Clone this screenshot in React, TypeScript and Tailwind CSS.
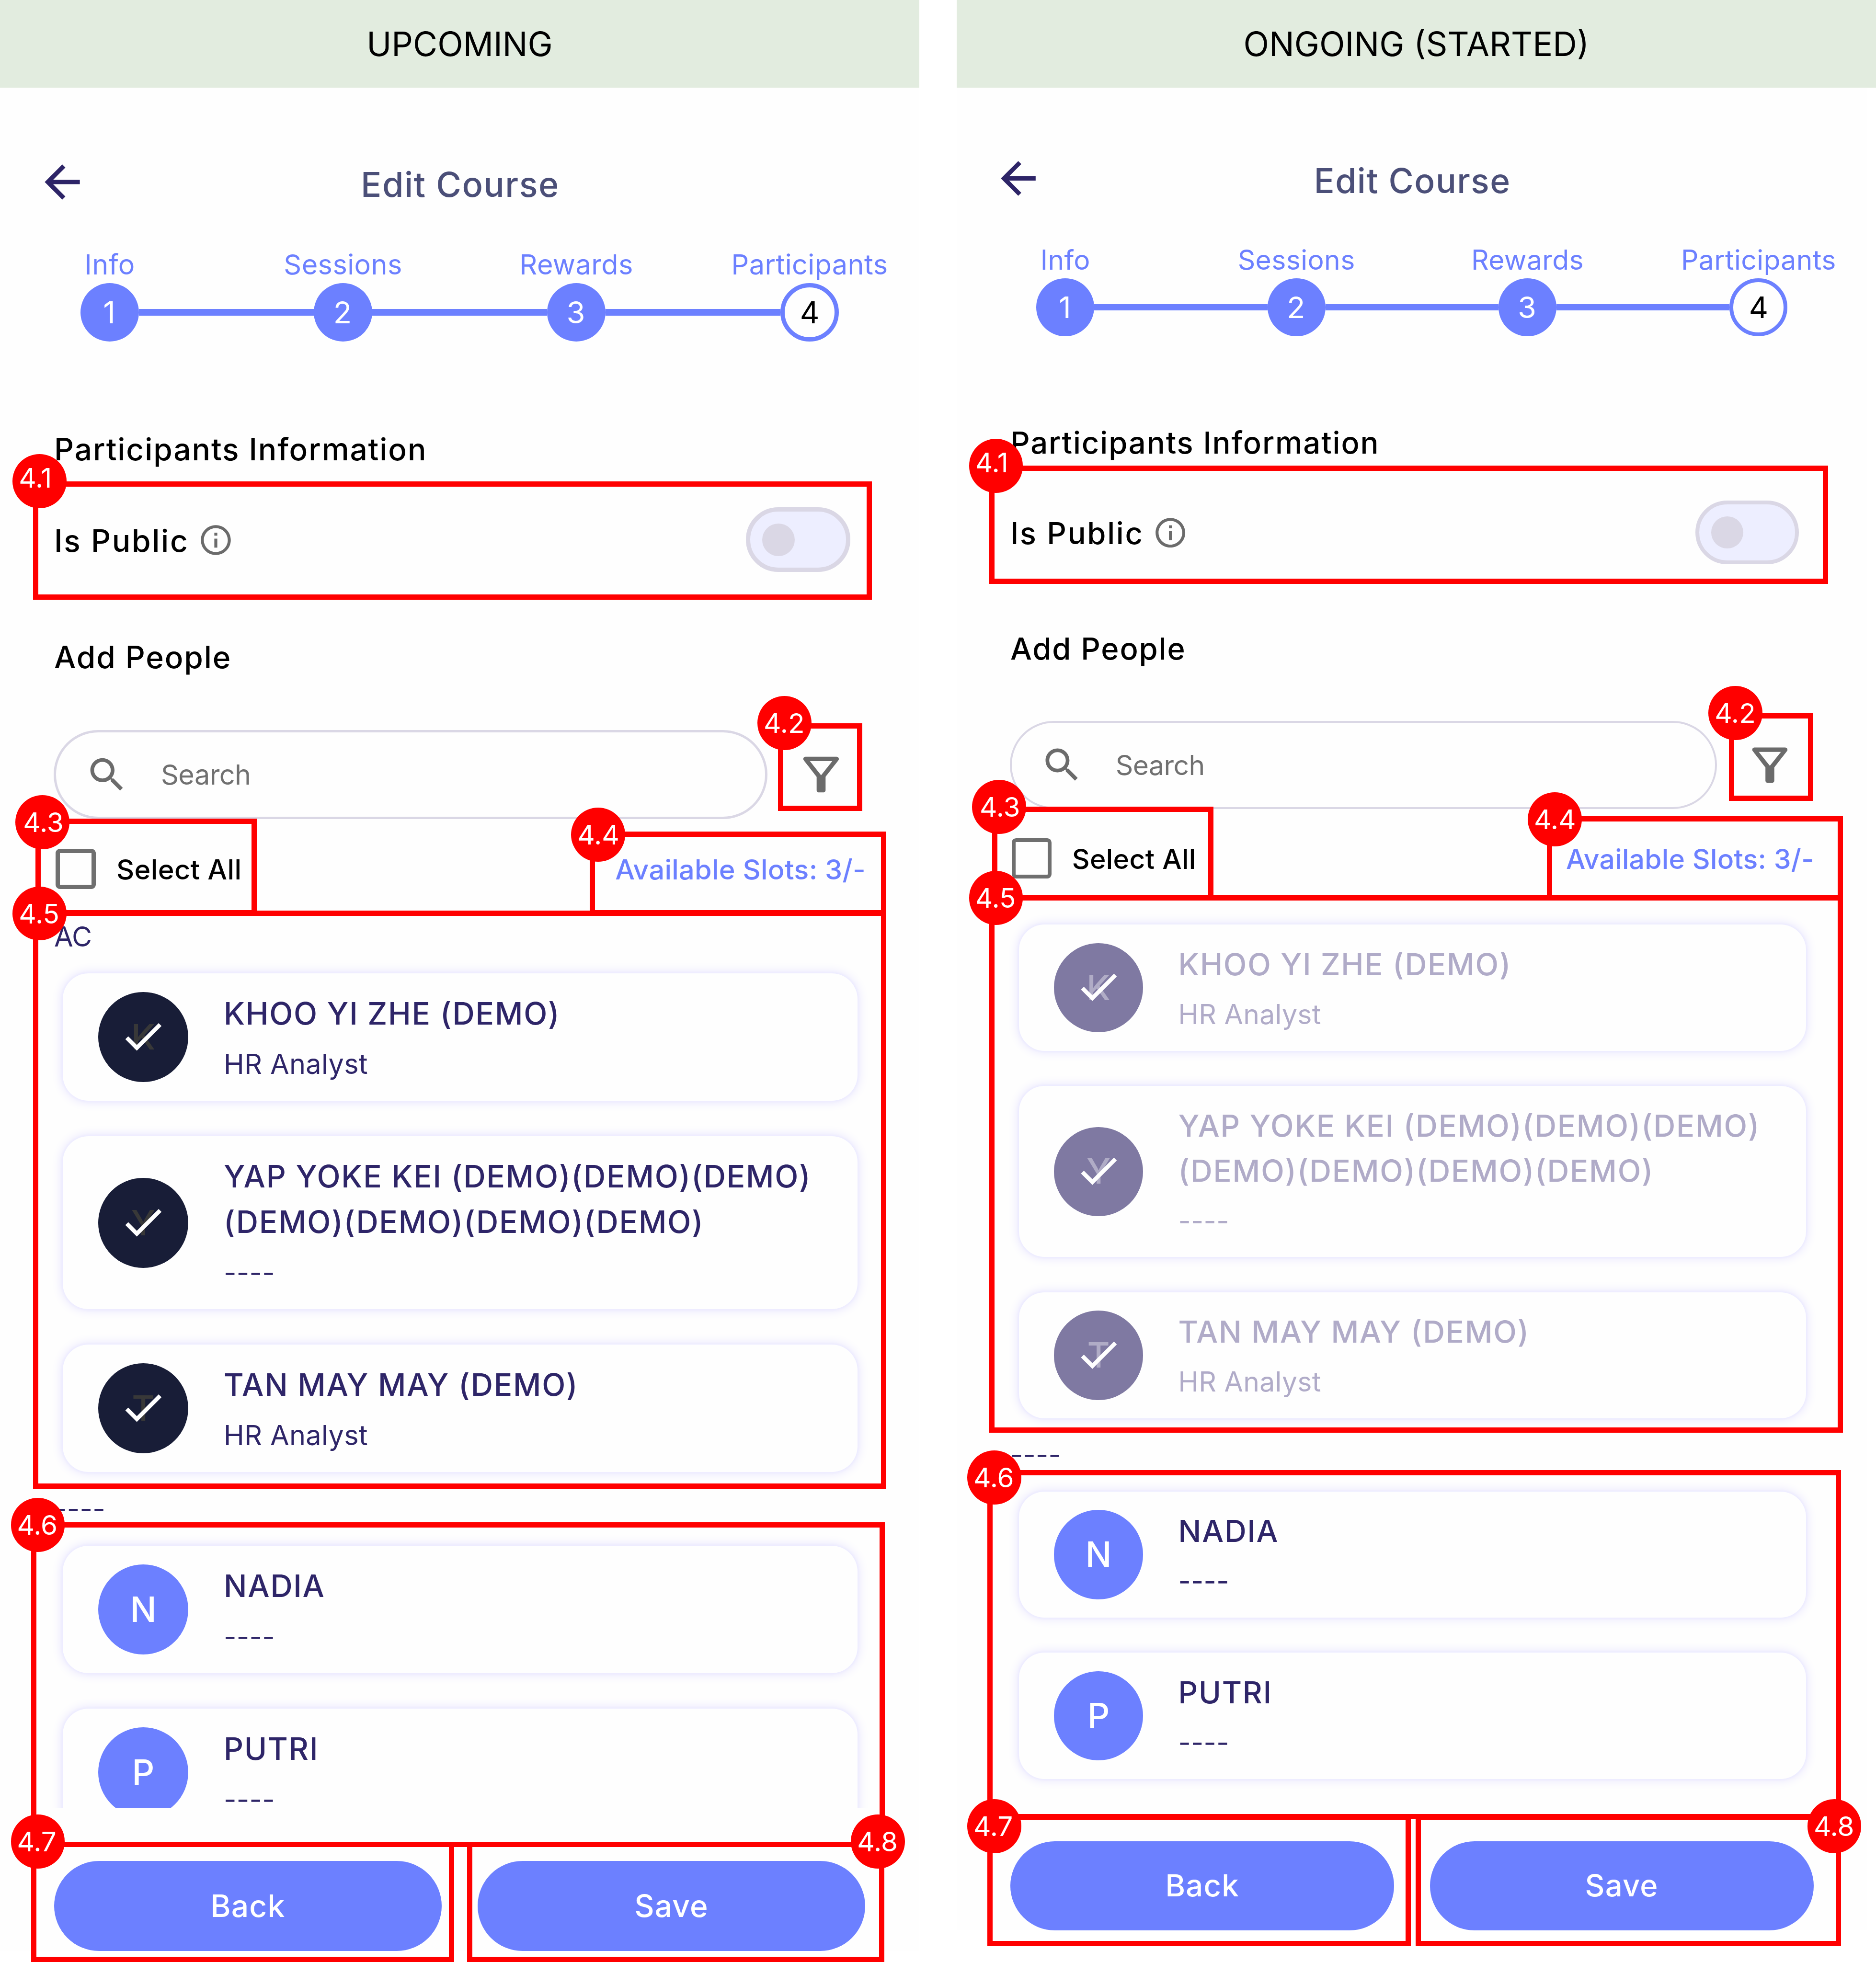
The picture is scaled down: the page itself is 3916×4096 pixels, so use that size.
import React from "react";

const font = "font-['Inter',sans-serif]";

function BackArrow() {
  return (
    <svg viewBox="0 0 24 24" className="size-[110px] shrink-0 fill-[#2d2467]">
      <path d="M20 11H7.83l5.59-5.59L12 4l-8 8 8 8 1.41-1.41L7.83 13H20v-2z" />
    </svg>
  );
}

function InfoIcon() {
  return (
    <svg viewBox="0 0 24 24" className="size-[75px] shrink-0 fill-[#6b6b6b]">
      <path d="M11 7h2v2h-2zm0 4h2v6h-2zm1-9C6.48 2 2 6.48 2 12s4.48 10 10 10 10-4.48 10-10S17.52 2 12 2zm0 18c-4.41 0-8-3.59-8-8s3.59-8 8-8 8 3.59 8 8-3.59 8-8 8z" />
    </svg>
  );
}

function SearchIcon() {
  return (
    <svg viewBox="0 0 24 24" className="size-[93px] shrink-0 fill-[#6b6b6b]">
      <path d="M15.5 14h-.79l-.28-.27C15.41 12.59 16 11.11 16 9.5 16 5.91 13.09 3 9.5 3S3 5.91 3 9.5 5.91 16 9.5 16c1.61 0 3.09-.59 4.23-1.57l.27.28v.79l5 4.99L20.49 19l-4.99-5zm-6 0C7.01 14 5 11.99 5 9.5S7.01 5 9.5 5 14 7.01 14 9.5 11.99 14 9.5 14z" />
    </svg>
  );
}

function FilterIcon() {
  return (
    <svg viewBox="0 0 24 24" className="size-[112px] shrink-0 fill-[#6b6b6b]">
      <path d="M7 6h10l-5.01 6.3L7 6zm-2.75-.39C6.27 8.2 10 13 10 13v6c0 .55.45 1 1 1h2c.55 0 1-.45 1-1v-6s3.72-4.8 5.74-7.39A.998.998 0 0 0 18.95 4H5.04c-.83 0-1.3.95-.79 1.61z" />
    </svg>
  );
}

function CheckIcon() {
  return (
    <svg viewBox="0 0 24 24" className="absolute left-[42px] top-[41px] size-[103px] fill-white">
      <path d="M9 16.17 4.83 12l-1.42 1.41L9 19 21 7l-1.41-1.41z" />
    </svg>
  );
}

const steps = ["Info", "Sessions", "Rewards", "Participants"];

function Stepper() {
  return (
    <div className="ml-[168px] mt-[61px] flex h-[212px] items-start">
      {steps.map((label, i) => (
        <React.Fragment key={label}>
          {i > 0 && <div className="mt-[144px] h-[14px] w-[365px] shrink-0 bg-[#6c80ff]" />}
          <div className="flex w-[122px] shrink-0 flex-col items-center">
            <span className="h-[90px] whitespace-nowrap text-[57.6px] leading-[102px] tracking-[0.4px] text-[#6c80ff]">{label}</span>
            <div
              className={
                i === 3
                  ? "flex size-[122px] items-center justify-center rounded-full border-[9px] border-[#6c80ff] bg-[#fefefe] text-[63px] text-black"
                  : "flex size-[122px] items-center justify-center rounded-full bg-[#6c80ff] pr-[2px] text-[63px] text-white"
              }
            >
              {i + 1}
            </div>
          </div>
        </React.Fragment>
      ))}
    </div>
  );
}

type Person = { name: string[]; sub: string; selected?: boolean };

const picked: Person[] = [
  { name: ["KHOO YI ZHE (DEMO)"], sub: "HR Analyst", selected: true },
  { name: ["YAP YOKE KEI (DEMO)(DEMO)(DEMO)", "(DEMO)(DEMO)(DEMO)(DEMO)"], sub: "----", selected: true },
  { name: ["TAN MAY MAY (DEMO)"], sub: "HR Analyst", selected: true },
];
const others: Person[] = [
  { name: ["NADIA"], sub: "----" },
  { name: ["PUTRI"], sub: "----" },
];

function PersonCard({ p, locked }: { p: Person; locked: boolean }) {
  const dim = locked && p.selected;
  const avatar = dim ? "bg-[#7f79a2] text-[#b0acc6]" : p.selected ? "bg-[#181d37] text-[#383838]" : "bg-[#6c80ff] text-white";
  return (
    <div className="mb-[74px] ml-[131px] flex w-[1659px] shrink-0 items-center rounded-[54px] bg-[#fefefe] py-[37px] pl-[74px] shadow-[0_0_4px_2px_#ecebff,0_0_22px_2px_#e6e3ff]">
      <div className={"relative flex size-[188px] shrink-0 items-center justify-center rounded-full text-[73px] font-medium " + avatar}>
        {p.name[0][0]}
        {p.selected && <CheckIcon />}
      </div>
      <div className={"-mb-[4px] ml-[74px] flex flex-col " + (dim ? "text-[#b0abc8]" : "text-[#2e2568]")}>
        <div className="-mt-px text-[64px] font-medium leading-[95px] tracking-[1.8px]">
          {p.name.map((l) => (
            <div key={l} className="whitespace-nowrap">{l}</div>
          ))}
        </div>
        <div className="mt-[15px] text-[57.6px] leading-[87px] tracking-[0.3px]">{p.sub}</div>
      </div>
    </div>
  );
}

function Phone({ locked }: { locked: boolean }) {
  return (
    <div className="flex w-[1919px] flex-col bg-[#fefefe]">
      <div className="flex items-start pl-[75px] pt-[142px]">
        <BackArrow />
        <h1 className="ml-[568px] mt-[5px] whitespace-nowrap text-[72px] font-medium leading-[110px] tracking-[1.5px] text-[#4b4f78]">Edit Course</h1>
      </div>
      <Stepper />
      <h2 className="ml-[113px] mt-[175px] text-[64px] font-medium leading-[100px] tracking-[1.9px] text-black">Participants Information</h2>
      <div className="ml-[113px] mt-[71px] flex h-[135px] items-center">
        <span className="pt-[5px] text-[64px] font-medium tracking-[2.7px] text-black">Is Public</span>
        <span className="ml-[18px] mt-[2px]"><InfoIcon /></span>
        <div className="ml-auto mr-[144px] flex h-[135px] w-[218px] items-center rounded-full border-[9px] border-[#dad7e5] bg-[#edeeff] pl-[25px]">
          <div className="size-[68px] rounded-full bg-[#dad7e5]" />
        </div>
      </div>
      <h2 className="ml-[113px] mt-[128px] text-[64px] font-medium leading-[100px] tracking-[1.9px] text-black">Add People</h2>
      <div className="mt-[102px] flex items-center pl-[112px]">
        <div className="flex h-[186px] w-[1490px] items-center rounded-full border-[5px] border-[#dad7e5] pl-[60px]">
          <SearchIcon />
          <span className="ml-[66px] text-[57.6px] tracking-[-0.6px] text-[#707070]">Search</span>
        </div>
        <span className="ml-[56px]"><FilterIcon /></span>
      </div>
      <div className="mt-[61px] flex h-[85px] items-center pl-[116px] pr-[112px]">
        <div className="size-[84px] rounded-[9px] border-[9px] border-[#6f6f6f]" />
        <span className="ml-[43px] pt-[3px] text-[57.6px] font-medium tracking-[0.4px] text-black">Select All</span>
        <span className="ml-auto pt-[3px] text-[57.6px] font-medium tracking-[0.3px] text-[#6c80ff]">Available Slots: 3/-</span>
      </div>
      <div className="mt-[52px] flex h-[1867px] flex-col overflow-hidden">
        <div className={locked ? "-mt-[79px] flex shrink-0 flex-col" : "flex shrink-0 flex-col"}>
          <div className={"ml-[113px] flex h-[124px] shrink-0 items-start text-[57.6px] leading-[94px] tracking-[-0.8px] text-[#2e2568] " + (locked ? "invisible" : "")}>AC</div>
          {picked.map((p) => <PersonCard key={p.name[0]} p={p} locked={locked} />)}
          <div className="-mt-[40px] ml-[113px] flex h-[120px] shrink-0 items-start text-[57.6px] leading-[84px] tracking-[0.3px] text-[#2e2568]">----</div>
          {others.map((p) => <PersonCard key={p.name[0]} p={p} locked={locked} />)}
        </div>
      </div>
      <div className="mt-[110px] flex gap-[75px] pl-[113px]">
        {["Back", "Save"].map((t) => (
          <button key={t} className="h-[188px] w-[809px] rounded-full bg-[#6c80ff] text-[64px] font-medium tracking-[1.2px] text-white">{t}</button>
        ))}
      </div>
    </div>
  );
}

type Mark = { box: [number, number, number, number]; dot: [number, number]; label: string };

const marks: Mark[] = [
  { label: "4.1", box: [69, 1004.7, 1820, 1251.6], dot: [26.3, 948.3] },
  { label: "4.2", box: [1623.5, 1509.7, 1800, 1693.3], dot: [1581, 1453.2] },
  { label: "4.3", box: [74, 1709, 536, 1910.8], dot: [32.3, 1660] },
  { label: "4.4", box: [1231.4, 1735.7, 1850, 1910.8], dot: [1192.3, 1686.2] },
  { label: "4.5", box: [69, 1901, 1850, 3108], dot: [26.3, 1850.5] },
  { label: "4.6", box: [65, 3178, 1846.5, 3855.6], dot: [22.5, 3127.3] },
  { label: "4.7", box: [65, 3844.7, 948, 4096], dot: [22.5, 3788.2] },
  { label: "4.8", box: [974.6, 3844.7, 1846.5, 4096], dot: [1776.3, 3788.2] },
  { label: "4.1", box: [2065.1, 972.4, 3816.4, 1219.4], dot: [2022.8, 916] },
  { label: "4.2", box: [3608.5, 1488.8, 3785.3, 1672.4], dot: [3566.2, 1432.4] },
  { label: "4.3", box: [2071.3, 1683.7, 2533, 1878.6], dot: [2029, 1628] },
  { label: "4.4", box: [3228.9, 1703.5, 3847.5, 1878.6], dot: [3189, 1654] },
  { label: "4.5", box: [2065.1, 1868.7, 3847.5, 2990.8], dot: [2022.8, 1818.2] },
  { label: "4.6", box: [2061.4, 3068.9, 3842.6, 3798], dot: [2019, 3028] },
  { label: "4.7", box: [2061.4, 3788, 2945, 4063.4], dot: [2019, 3756] },
  { label: "4.8", box: [2955, 3788, 3842.6, 4063.4], dot: [3772.9, 3756] },
];

function Annotations() {
  return (
    <div className="pointer-events-none absolute inset-0">
      {marks.map((m, i) => (
        <div
          key={i}
          className="absolute border-[11px] border-[#ff0000]"
          style={{ left: m.box[0], top: m.box[1], width: m.box[2] - m.box[0], height: m.box[3] - m.box[1] }}
        />
      ))}
      {marks.map((m, i) => (
        <div
          key={i}
          className={
            "absolute flex size-[112.6px] items-center rounded-full bg-[#ff0000] text-[56.6px] leading-none text-white " +
            (m.label === "4.1" ? "pb-[12px] pl-[13px]" : m.label === "4.3" ? "pl-[16px] pt-[2px]" : "pl-[13px] pt-[2px]")
          }
          style={{ left: m.dot[0], top: m.dot[1] }}
        >
          {m.label}
        </div>
      ))}
    </div>
  );
}

function Banner({ text }: { text: string }) {
  return <div className="relative z-10 flex h-[183px] items-center justify-center bg-[#e2ecdf] text-[70px] text-black">{text}</div>;
}

export default function App() {
  return (
    <div className={"relative flex h-[4096px] w-[3916px] justify-between overflow-hidden bg-white " + font}>
      <section className="flex w-[1919px] flex-col">
        <Banner text="UPCOMING" />
        <Phone locked={false} />
      </section>
      <section className="flex w-[1919px] flex-col">
        <Banner text="ONGOING (STARTED)" />
        <div className="-mt-[6px] [zoom:0.9905]">
          <Phone locked />
        </div>
      </section>
      <Annotations />
    </div>
  );
}
